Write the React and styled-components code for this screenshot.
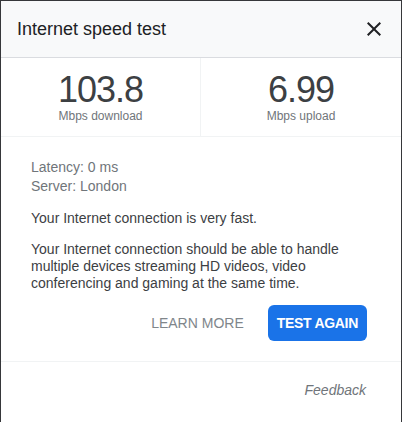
import React from "react";
import styled, { createGlobalStyle } from "styled-components";

const Global = createGlobalStyle`
  html, body { margin: 0; padding: 0; background: #36373a; }
  body { font-family: "Liberation Sans", Arial, sans-serif; }
  * { box-sizing: border-box; }
`;

const Card = styled.div`
  margin: 1px 1px 0 1px;
  min-height: 421px;
  background: #ffffff;
  display: flex;
  flex-direction: column;
`;

const Header = styled.header`
  height: 57px;
  display: flex;
  align-items: center;
  justify-content: space-between;
  padding: 0 15px 1px 16px;
  background: #f8f9fa;
  border-bottom: 1px solid #dadce0;
`;

const Title = styled.h1`
  margin: 0;
  font-size: 18px;
  line-height: 24px;
  font-weight: 400;
  color: #202124;
`;

const CloseButton = styled.button`
  width: 24px;
  height: 24px;
  padding: 0;
  border: 0;
  background: none;
  color: #202124;
  display: flex;
  align-items: center;
  justify-content: center;
  cursor: pointer;
`;

const Stats = styled.div`
  display: grid;
  grid-template-columns: 1fr 1fr;
  border-bottom: 1px solid #f1f3f4;
`;

const Stat = styled.div`
  display: flex;
  flex-direction: column;
  align-items: center;
  padding: 11px 0 14px;
  border-right: ${(p) => (p.$divider ? "1px solid #f1f3f4" : "0")};
`;

const Value = styled.div`
  font-size: 36px;
  line-height: 41px;
  letter-spacing: -1px;
  color: #3c4043;
`;

const Unit = styled.div`
  font-size: 12px;
  line-height: 12px;
  color: #70757a;
`;

const Body = styled.div`
  padding: 21px 34px 0 30px;
`;

const Info = styled.div`
  font-size: 14px;
  line-height: 19px;
  color: #70757a;
`;

const Text = styled.p`
  margin: 14px 0 0;
  font-size: 14px;
  line-height: 17px;
  color: #3c4043;
`;

const Actions = styled.div`
  display: flex;
  justify-content: flex-end;
  align-items: center;
  gap: 16px;
  padding: 13px 0 20px;
`;

const Button = styled.button`
  height: 36px;
  border: 0;
  border-radius: 6px;
  font-family: "Liberation Sans", Arial, sans-serif;
  font-size: 14px;
  cursor: pointer;
  background: ${(p) => (p.$primary ? "#1a73e8" : "transparent")};
  color: ${(p) => (p.$primary ? "#ffffff" : "#80868b")};
  font-weight: ${(p) => (p.$primary ? 700 : 400)};
  letter-spacing: ${(p) => (p.$primary ? "-0.3px" : "0")};
  padding: ${(p) => (p.$primary ? "0 9px" : "0 8px")};
`;

const Footer = styled.div`
  border-top: 1px solid #f1f3f4;
  padding: 20px 35px 0 30px;
  display: flex;
  justify-content: flex-end;
`;

const Feedback = styled.a`
  font-size: 14px;
  line-height: 16px;
  font-style: italic;
  color: #70757a;
  text-decoration: none;
  cursor: pointer;
`;

export default function App() {
  return (
    <>
      <Global />
      <Card>
        <Header>
          <Title>Internet speed test</Title>
          <CloseButton aria-label="Close">
            <svg width="24" height="24" viewBox="0 0 24 24" fill="currentColor">
              <path d="M19 6.41L17.59 5 12 10.59 6.41 5 5 6.41 10.59 12 5 17.59 6.41 19 12 13.41 17.59 19 19 17.59 13.41 12z" />
            </svg>
          </CloseButton>
        </Header>
        <Stats>
          <Stat $divider>
            <Value>103.8</Value>
            <Unit>Mbps download</Unit>
          </Stat>
          <Stat>
            <Value>6.99</Value>
            <Unit>Mbps upload</Unit>
          </Stat>
        </Stats>
        <Body>
          <Info>Latency: 0 ms</Info>
          <Info>Server: London</Info>
          <Text>Your Internet connection is very fast.</Text>
          <Text>
            Your Internet connection should be able to handle multiple devices
            streaming HD videos, video conferencing and gaming at the same time.
          </Text>
          <Actions>
            <Button>LEARN MORE</Button>
            <Button $primary>TEST AGAIN</Button>
          </Actions>
        </Body>
        <Footer>
          <Feedback>Feedback</Feedback>
        </Footer>
      </Card>
    </>
  );
}
